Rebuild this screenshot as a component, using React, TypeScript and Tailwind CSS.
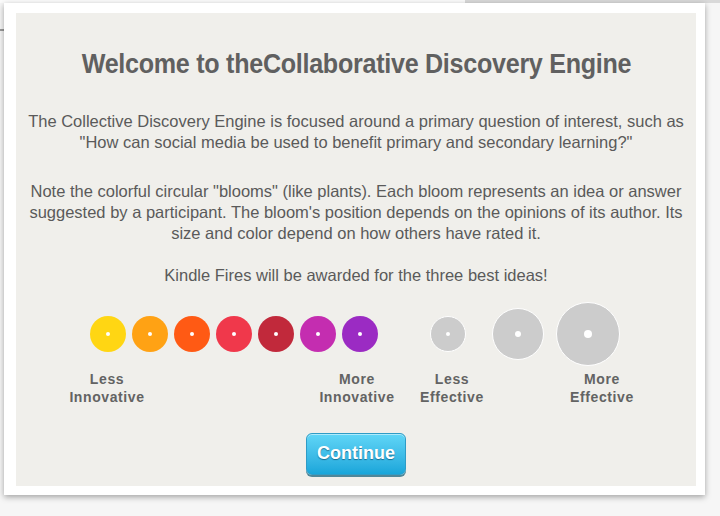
const blooms = ['#ffd613', '#ffa214', '#ff5a14', '#f0384b', '#c1293b', '#c42db0', '#9b2bc3'];

const sizes = [
  { d: 'w-[36px] h-[36px]', dot: 'w-[4px] h-[4px]', ml: 'ml-0' },
  { d: 'w-[52px] h-[52px]', dot: 'w-[6px] h-[6px]', ml: 'ml-[26px]' },
  { d: 'w-[64px] h-[64px]', dot: 'w-[8px] h-[8px]', ml: 'ml-[12px]' },
];

function Label({ top, bottom, className }: { top: string; bottom: string; className: string }) {
  return (
    <div className={`w-[90px] shrink-0 text-center ${className}`}>
      <div>{top}</div>
      <div>{bottom}</div>
    </div>
  );
}

export default function App() {
  return (
    <div className="w-[720px] h-[516px] bg-[#f6f6f6] overflow-hidden relative" style={{ fontFamily: '"Liberation Sans", Arial, sans-serif' }}>
      <div className="absolute left-0 top-0 w-[465px] h-[3px] bg-[#fbfbfb]" />
      <div className="absolute left-[465px] top-0 w-[255px] h-[3px] bg-[#d9d9d9]" />
      <div className="absolute left-0 top-[29px] w-[6px] h-[2px] bg-[#9a9a9a]" />
      <div className="absolute left-[4px] top-[3px] w-[701px] h-[492px] bg-white pl-[12px] pt-[10px] pr-[9px] pb-[9px] shadow-[0_2px_6px_rgba(0,0,0,0.35)]">
        <div className="w-[680px] h-[473px] bg-[#f0efeb] flex flex-col items-center pt-[35px]">
          <h1 className="whitespace-nowrap text-[27px] leading-[32px] font-bold text-[#606060] scale-x-[0.93] tracking-[-0.3px]">
            Welcome to theCollaborative Discovery Engine
          </h1>
          <div className="mt-[31px] text-center text-[16.5px] leading-[21px] text-[#5a5a5a] whitespace-nowrap">
            <p>The Collective Discovery Engine is focused around a primary question of interest, such as</p>
            <p>"How can social media be used to benefit primary and secondary learning?"</p>
          </div>
          <div className="mt-[28px] text-center text-[16.5px] leading-[21px] text-[#5a5a5a] whitespace-nowrap">
            <p>Note the colorful circular "blooms" (like plants). Each bloom represents an idea or answer</p>
            <p>suggested by a participant. The bloom's position depends on the opinions of its author. Its</p>
            <p>size and color depend on how others have rated it.</p>
          </div>
          <p className="mt-[21px] text-[16.5px] leading-[21px] text-[#5a5a5a]">Kindle Fires will be awarded for the three best ideas!</p>

          <div className="self-start mt-[15.5px] h-[64px] flex items-center pl-[74px]">
            <div className="flex gap-[6px]">
              {blooms.map((c) => (
                <div
                  key={c}
                  className="w-[36px] h-[36px] rounded-full flex items-center justify-center"
                  style={{ backgroundColor: c }}
                >
                  <div className="w-[4px] h-[4px] rounded-full bg-white" />
                </div>
              ))}
            </div>
            <div className="flex items-center ml-[52px]">
              {sizes.map((s) => (
                <div
                  key={s.d}
                  className={`${s.d} ${s.ml} rounded-full bg-[#cccccc] border-[1.5px] border-white flex items-center justify-center`}
                >
                  <div className={`${s.dot} rounded-full bg-white`} />
                </div>
              ))}
            </div>
          </div>

          <div className="self-start mt-[4px] flex pl-[46px] text-[14px] leading-[18px] font-bold text-[#636363] tracking-[0.6px]">
            <Label top="Less" bottom="Innovative" className="" />
            <Label top="More" bottom="Innovative" className="ml-[160px]" />
            <Label top="Less" bottom="Effective" className="ml-[5px]" />
            <Label top="More" bottom="Effective" className="ml-[60px]" />
          </div>

          <button
            className="mt-[27px] w-[100px] h-[42px] rounded-[6px] border border-[#2f9cc6] bg-gradient-to-b from-[#5fd6f7] to-[#17a6da] text-white text-[18px] font-bold shadow-[0_2px_0_#4f8799,inset_0_1px_0_rgba(255,255,255,0.5)] [text-shadow:0_1px_1px_rgba(0,60,90,0.6)]"
          >
            Continue
          </button>
        </div>
      </div>
    </div>
  );
}
